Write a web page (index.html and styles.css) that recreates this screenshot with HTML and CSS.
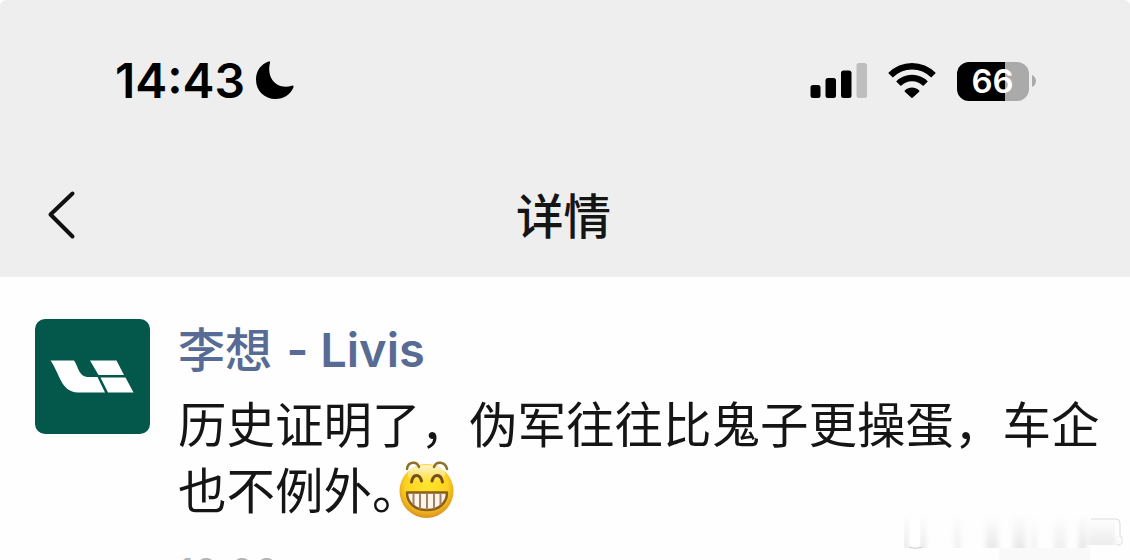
FILE: index.html
```
<!DOCTYPE html>
<html lang="zh-CN">
<head>
    <meta charset="UTF-8">
    <title>详情</title>
    <link rel="stylesheet" href="styles.css">
</head>
<body>
<div id="screen">
    <header>
        <div class="status-bar">
            <div class="clock">
                <span class="time">14:43</span>
                <svg class="moon" width="40" height="40" viewBox="0 0 40 40">
                    <path d="M15 1.500C15.600 .3 14.600 .2 13.500 .6C5.800 3.400 1 10 1 18.500C1 30 9.500 38 20.500 38C28.500 38 35.500 33.500 38.400 26.500C38.900 25.100 38.200 24.300 36.800 24.700C23 29 11 18.500 15 1.500Z"/>
                </svg>
            </div>
            <div class="indicators">
                <svg class="signal" width="57" height="38" viewBox="0 0 57 38">
                    <rect x="0.500" y="23" width="10" height="13" rx="2.500"/>
                    <rect x="15.500" y="16" width="10.500" height="20" rx="2.500"/>
                    <rect x="31" y="8.500" width="10.500" height="27.500" rx="2.500"/>
                    <rect class="dim" x="46.500" y="1" width="10.500" height="35" rx="2.500"/>
                </svg>
                <svg class="wifi" width="48" height="38" viewBox="0 0 48 38">
                    <path class="arc" d="M2.500 13.300C14.500 1.200 33.500 1.200 45.500 13.300"/>
                    <path class="arc" d="M10.500 21.800C18 14.200 30 14.200 37.500 21.800"/>
                    <path d="M17 28.300C21 24.600 27 24.600 31 28.300Q31.800 29 31.200 29.700L24.900 35.600Q24 36.400 23.100 35.600L16.800 29.700Q16.200 29 17 28.300Z"/>
                </svg>
                <div class="battery">66</div>
                <svg class="battery-cap" width="4" height="12" viewBox="0 0 4 12">
                    <path d="M0 0C5.300 2 5.300 10 0 12Z"/>
                </svg>
            </div>
        </div>
        <nav>
            <svg class="back" width="30" height="50" viewBox="0 0 30 50">
                <path d="M26.500 3.500L4.500 24.500L26.500 46.500"/>
            </svg>
            <h1>详情</h1>
        </nav>
    </header>

    <main class="post">
        <svg class="avatar" width="115" height="115" viewBox="0 0 115 115">
            <rect class="avatar-bg" width="115" height="115" rx="10"/>
            <path d="M15.500 41.500H39C43 47 44 57.500 52 58H62.500L70 73.500H43C26 73 25 55 15.500 41.500Z"/>
            <path d="M55 41.500H81.500L89 56H63.500Z"/>
            <path d="M65.500 58.500H90.500L98.500 73.500H73Z"/>
        </svg>
        <div class="content">
            <div class="author">李想 <span class="latin">- Livis</span></div>
            <p>历史证明了，伪军往往比鬼子更操蛋，车企<br>也不例外。<svg class="emoji" width="58" height="60" viewBox="0 0 58 60">
                <defs>
                    <radialGradient id="face" cx=".5" cy=".4" r=".6">
                        <stop offset="0" stop-color="#ffe52c"/>
                        <stop offset=".65" stop-color="#fdd321"/>
                        <stop offset="1" stop-color="#dc901c"/>
                    </radialGradient>
                    <linearGradient id="shine" x1="0" y1="0" x2="0" y2="1">
                        <stop offset="0" stop-color="#fff6cf"/>
                        <stop offset="1" stop-color="#fff6cf" stop-opacity="0"/>
                    </linearGradient>
                </defs>
                <circle cx="28.500" cy="31" r="27" fill="url(#face)"/>
                <ellipse cx="28.500" cy="14" rx="19" ry="9" fill="url(#shine)"/>
                <path class="brow" d="M9 9C10 1 19 1 21 7M36 7C38 1 47 1 49 9"/>
                <path class="eye" d="M13.500 22C15 13.500 21.500 13.500 23.500 21M34 21C36 13.500 43 13.500 44.500 22"/>
                <path class="teeth" d="M9 32.500H49C49 43 41 50 29 50S9 43 9 32.500Z"/>
                <path class="gaps" d="M15.500 33V45M22 33V49M29 33V50M36 33V49M42.500 33V45"/>
            </svg></p>
            <div class="posted">10:00</div>
        </div>
    </main>

    <svg class="watermark" width="226" height="50" viewBox="0 0 226 50">
        <defs>
            <linearGradient id="fade" x1="0" y1="0" x2="0" y2="1">
                <stop offset="0" stop-color="#aaa" stop-opacity="0"/>
                <stop offset="1" stop-color="#aaa" stop-opacity=".35"/>
            </linearGradient>
            <filter id="smear" x="-5%" width="110%"><feGaussianBlur stdDeviation="2.500 .5"/></filter>
        </defs>
        <path d="M95 38H186V50H95Z" fill="#f9f9f9"/>
        <g fill="url(#fade)" filter="url(#smear)">
            <rect x="0" y="5" width="4" height="33"/>
            <rect x="17" y="5" width="4" height="33"/>
            <rect x="50" y="5" width="7" height="33" opacity=".5"/>
            <rect x="82" y="5" width="12" height="33" opacity=".7"/>
            <rect x="109" y="5" width="13" height="33" opacity=".7"/>
            <rect x="128" y="5" width="4" height="33" opacity=".6"/>
            <rect x="150" y="5" width="12" height="33" opacity=".5"/>
            <rect x="175" y="5" width="7" height="33" opacity=".9"/>
            <rect x="184" y="8" width="28" height="27" opacity=".6"/>
        </g>
        <path d="M6 8H16V36H6Z" fill="#fff"/>
        <path d="M5 37.500Q11 39 18 37.500" fill="none" stroke="#ccc"/>
        <path d="M187 9H212Q216 9 216 13V27H218V32Q218 35 213 35" fill="none" stroke="#ddd"/>
        <path d="M213 12V26" stroke="#fff" stroke-width="3"/>
    </svg>
</div>
</body>
</html>
```

FILE: styles.css
```
body {
    margin: 0;
    background: #fff;
}

#screen {
    position: relative;
    width: 1130px;
    height: 560px;
    overflow: hidden;
    background: #fefefe;
    font-family: Inter, "Noto Sans CJK SC", sans-serif;
}

header {
    height: 277px;
    background: #eee;
    border-radius: 6px 6px 0 0;
}

.status-bar {
    display: flex;
    justify-content: space-between;
    align-items: center;
    box-sizing: border-box;
    height: 162px;
    padding: 0 94px 0 115px;
}

.clock,
.indicators {
    display: flex;
    align-items: center;
}

.time {
    width: 140px;
    font-size: 48px;
    font-weight: 600;
    line-height: 60px;
    white-space: nowrap;
}

.signal .dim {
    fill: #bebebe;
}

.wifi {
    margin: 0 21px;
}

.wifi .arc {
    fill: none;
    stroke: #000;
    stroke-width: 6.5;
}

.battery {
    width: 72px;
    height: 39px;
    border-radius: 12px;
    background: linear-gradient(to right, #000 66%, #aaa 66%);
    color: #fff;
    font-size: 33px;
    font-weight: 600;
    line-height: 39px;
    text-align: center;
    text-indent: -1px;
}

.battery-cap {
    margin-left: 3px;
    fill: #aaa;
}

nav {
    display: grid;
    grid-template-columns: 1fr auto 1fr;
    align-items: center;
    height: 106px;
    padding: 0 49px 0 46px;
}

.back {
    fill: none;
    stroke: #111;
    stroke-width: 4;
    stroke-linecap: round;
    stroke-linejoin: round;
}

h1 {
    margin: 0;
    padding-top: 4px;
    color: #151515;
    font-size: 47.5px;
    font-weight: 500;
    line-height: 60px;
}

.post {
    display: flex;
    padding: 42px 20px 0 35px;
}

.avatar {
    flex: none;
    margin-right: 28px;
    fill: #fff;
}

.avatar-bg {
    fill: #03574b;
}

.content {
    white-space: nowrap;
}

.author {
    height: 74px;
    color: #576b95;
    font-size: 47px;
    font-weight: 500;
    line-height: 62px;
}

.latin {
    margin-left: 2px;
    font-weight: 600;
}

p {
    margin: 0;
    color: #151515;
    font-size: 48.5px;
    line-height: 66px;
}

.emoji {
    margin: -10px 0 -10px -23px;
    vertical-align: -1px;
}

.brow,
.eye {
    fill: none;
    stroke: #8c7228;
    stroke-width: 2.5;
    stroke-linecap: round;
}

.eye {
    stroke: #76501a;
    stroke-width: 3;
}

.teeth {
    fill: #fff4e8;
    stroke: #8c5d16;
    stroke-width: 2.5;
    stroke-linejoin: round;
}

.gaps {
    stroke: #a08068;
    stroke-width: 2;
}

.posted {
    margin-top: 25px;
    color: #b4b4b4;
    font-size: 39px;
    line-height: 46px;
}

.watermark {
    position: absolute;
    top: 510px;
    right: 0;
}
```
